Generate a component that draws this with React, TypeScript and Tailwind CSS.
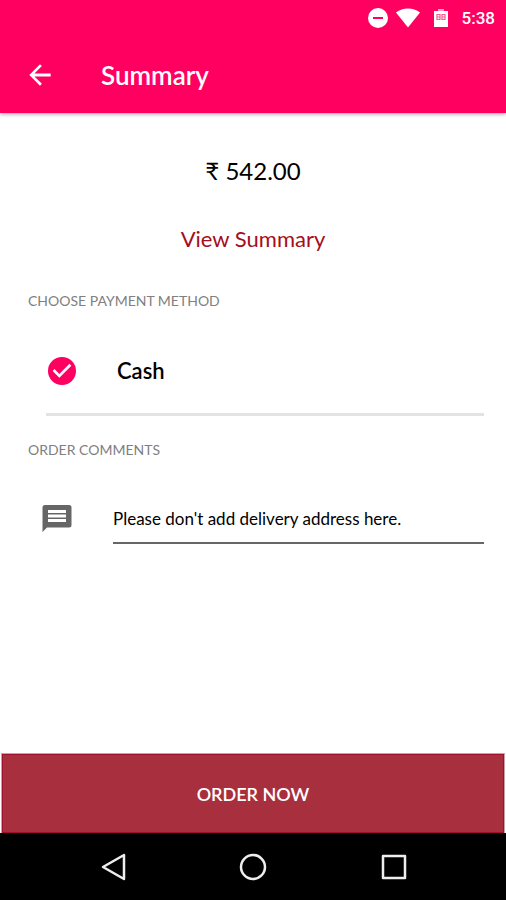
import { useState } from "react";

function StatusBar() {
  return (
    <div className="flex h-9 items-center justify-end pr-[11px]">
      <svg className="mr-2 size-5" viewBox="0 0 20 20" aria-label="Do not disturb">
        <circle cx="10" cy="10" r="10" fill="#fff" />
        <rect x="5" y="9" width="10" height="2" fill="#ff0060" />
      </svg>
      <svg className="mr-[14px] h-5 w-6" viewBox="0 0 24 20" aria-label="Wi-Fi">
        <path d="M0 4.500C3.500 1.800 7.500.5 12 .5s8.500 1.300 12 4L12 19.500z" fill="#fff" />
      </svg>
      <svg className="mr-3 h-5 w-4" viewBox="0 0 16 20" aria-label="Battery">
        <path d="M4 1h6v3H4z" fill="#ff9fc2" />
        <path d="M0 3h14v16H0z" fill="#fff" />
        <path
          d="M3 6.500h3v5H3zM3 9h3M8 6.500h3v5H8zM8 9h3"
          fill="none"
          stroke="#f45c8d"
          strokeWidth="1.200"
        />
      </svg>
      <span className="text-[17px] leading-6 font-medium">5:38</span>
    </div>
  );
}

function AppBar() {
  return (
    <header className="relative bg-[#ff0060] font-['Roboto',sans-serif] text-white shadow-[0_1px_4px_rgba(0,0,0,0.4)]">
      <StatusBar />
      <div className="flex h-[77px] items-center pl-6">
        <button type="button" aria-label="Back" className="size-8 p-0">
          <svg className="size-8" viewBox="0 0 24 24" fill="#fff">
            <path d="M20 10.900H7.830l5.590-5.590L12 4l-8 8 8 8 1.410-1.410L7.830 13.100H20z" />
          </svg>
        </button>
        <h1 className="ml-[45px] font-['Lato',sans-serif] text-[26px] leading-8 font-semibold">
          Summary
        </h1>
      </div>
    </header>
  );
}

function NavigationBar() {
  return (
    <nav className="flex h-[67px] items-center justify-center gap-[108px] bg-black">
      <button type="button" aria-label="Back" className="size-8">
        <svg viewBox="0 0 32 32" fill="none" stroke="#eee" strokeWidth="2.500" strokeLinejoin="round">
          <path d="M27 4v24L6 16z" />
        </svg>
      </button>
      <button type="button" aria-label="Home" className="size-8">
        <svg viewBox="0 0 32 32" fill="none" stroke="#eee" strokeWidth="2.500">
          <circle cx="16" cy="16" r="12" />
        </svg>
      </button>
      <button type="button" aria-label="Recent apps" className="size-8">
        <svg viewBox="0 0 32 32" fill="none" stroke="#eee" strokeWidth="2.500" strokeLinejoin="round">
          <rect x="6" y="5" width="22" height="22" />
        </svg>
      </button>
    </nav>
  );
}

export default function App() {
  const [cash, setCash] = useState(true);
  const [comment, setComment] = useState("Please don't add delivery address here.");

  return (
    <div className="flex min-h-screen flex-col bg-white font-['Lato',sans-serif] text-black">
      <AppBar />
      <main className="flex flex-1 flex-col pt-10">
        <p className="text-center text-2xl leading-9">₹ 542.00</p>
        <a href="#summary" className="mt-8 self-center text-[22px] leading-9 text-[#a40e20]">
          View Summary
        </a>

        <h2 className="mt-8 pl-7 text-sm leading-6 text-[#808080]">CHOOSE PAYMENT METHOD</h2>
        <label className="mr-[22px] ml-[46px] flex h-[103px] items-center border-b-3 border-[#e3e3e3] pt-4">
          <input
            type="checkbox"
            checked={cash}
            onChange={(e) => setCash(e.target.checked)}
            className="peer sr-only"
          />
          <svg
            className="size-8 fill-[#9a9a9a] peer-checked:fill-[#ff0060]"
            viewBox="0 0 24 24"
            aria-hidden="true"
          >
            <path d="M12 1.500a10.500 10.500 0 1 0 0 21 10.500 10.500 0 0 0 0-21zM10 17l-5-5 1.410-1.410L10 14.170l7.590-7.590L19 8z" />
          </svg>
          <span className="ml-[39px] text-[22px] leading-8 font-semibold">Cash</span>
        </label>

        <h2 className="mt-[22px] pl-7 text-sm leading-6 text-[#808080]">ORDER COMMENTS</h2>
        <div className="mt-8 mr-[22px] ml-10 flex items-start">
          <svg className="mt-2 size-[34px] shrink-0" viewBox="0 0 34 34" aria-hidden="true">
            <path
              d="M5 3h24a2.500 2.500 0 0 1 2.500 2.500V23a2.500 2.500 0 0 1-2.500 2.500H7L2.500 30V5.500A2.500 2.500 0 0 1 5 3z"
              fill="#666"
            />
            <path d="M8 8h18v3H8zM8 12.500h18v3H8zM8 17h18v3H8z" fill="#fff" />
          </svg>
          <input
            type="text"
            aria-label="Order comments"
            value={comment}
            onChange={(e) => setComment(e.target.value)}
            className="ml-[39px] h-[50px] min-w-0 flex-1 border-b-2 border-[#666] text-[17px] leading-6 outline-none"
          />
        </div>
      </main>
      <button
        type="button"
        className="mx-[2px] h-[79px] border border-[#a00f2c] bg-[#a72f3e] text-lg leading-8 font-semibold text-white outline outline-[#c9a3a9]"
      >
        ORDER NOW
      </button>
      <NavigationBar />
    </div>
  );
}
